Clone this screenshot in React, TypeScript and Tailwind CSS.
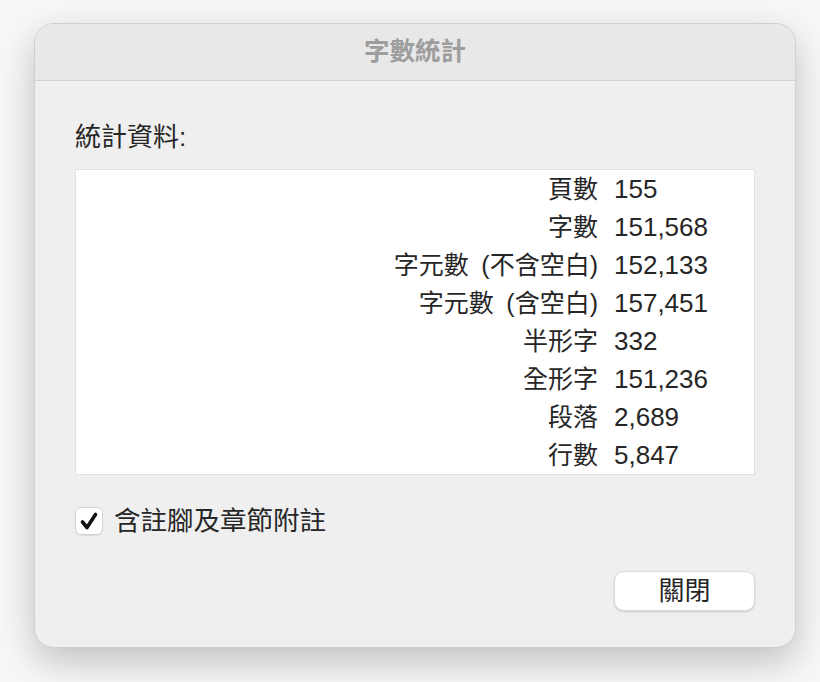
import React from 'react';

const rows: [string, string][] = [
  ['頁數', '155'],
  ['字數', '151,568'],
  ['字元數\u2002(不含空白)', '152,133'],
  ['字元數\u2002(含空白)', '157,451'],
  ['半形字', '332'],
  ['全形字', '151,236'],
  ['段落', '2,689'],
  ['行數', '5,847'],
];

const font = { fontFamily: '"Liberation Sans", "Noto Sans CJK TC", sans-serif' };

export default function App() {
  return (
    <div className="min-h-[682px] w-[820px] bg-[#f7f7f7] pl-[34px] pt-[23px]" style={font}>
      {/* Window */}
      <div className="flex h-[625px] w-[762px] flex-col overflow-hidden rounded-[20px] border border-[#cfcfd0] bg-[#efeff0] shadow-[0_14px_36px_rgba(0,0,0,0.22)]">
        {/* Title bar */}
        <div className="flex h-[57px] shrink-0 items-center justify-center border-b border-[#d2d2d3] bg-[#e8e8e9]">
          <span className="text-[25.5px] font-bold leading-none text-[#9d9d9e]">字數統計</span>
        </div>

        {/* Body */}
        <div className="flex flex-1 flex-col px-[40px] pt-[40px]">
          <div className="text-[26px] leading-[32px] text-[#262626]">統計資料:</div>

          <div className="mt-[16px] grid h-[306px] grid-cols-[522px_1fr] gap-x-[16px] border border-[#e2e2e3] bg-white">
            {rows.map(([label, value]) => (
              <React.Fragment key={label}>
                <div className="text-right text-[25px] leading-[38px] text-[#262626]">{label}</div>
                <div className="text-[26px] leading-[38px] text-[#262626]">{value}</div>
              </React.Fragment>
            ))}
          </div>

          {/* Checkbox */}
          <label className="mt-[30px] flex items-center gap-[11px]">
            <span className="flex h-[28px] w-[28px] items-center justify-center rounded-[6px] border border-[#d4d4d5] bg-white shadow-[0_1px_1px_rgba(0,0,0,0.08)]">
              <svg width="20" height="20" viewBox="0 0 20 20">
                <path
                  d="M3.5 11 L8 16.5 L16.5 3.5"
                  fill="none"
                  stroke="#111111"
                  strokeWidth="3.6"
                  strokeLinecap="round"
                  strokeLinejoin="round"
                />
              </svg>
            </span>
            <span className="text-[26.5px] leading-[32px] text-[#262626]">含註腳及章節附註</span>
          </label>

          {/* Actions */}
          <div className="mt-[34px] flex justify-end">
            <button className="h-[40px] w-[141px] rounded-[10px] border border-[#dcdcdd] bg-white text-[26px] leading-none text-[#262626] shadow-[0_1px_2px_rgba(0,0,0,0.18)]">
              關閉
            </button>
          </div>
        </div>
      </div>
    </div>
  );
}
